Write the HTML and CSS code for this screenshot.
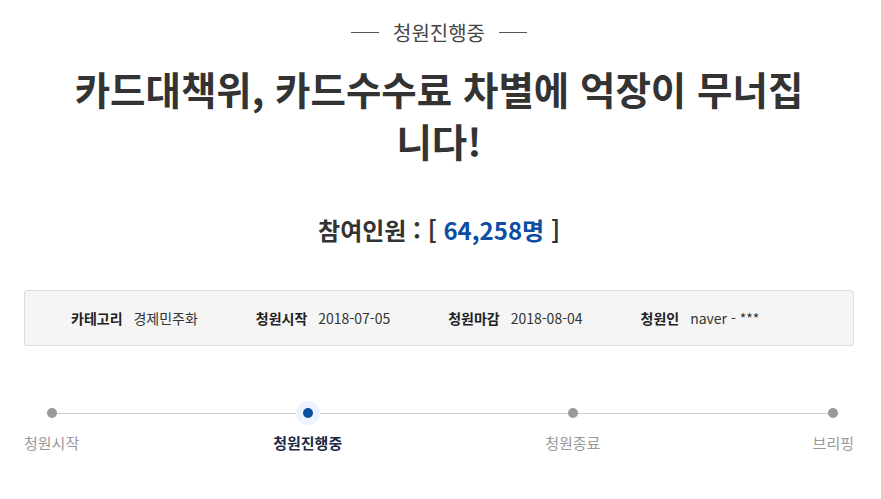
FILE: index.html
```html
<!DOCTYPE html>
<html lang="ko">
<head>
  <meta charset="UTF-8">
  <meta name="viewport" content="width=device-width, initial-scale=1.0">
  <title>청원 상세</title>
  <link rel="stylesheet" href="styles.css">
</head>
<body>
  <div class="petition">
    <!-- 상태 -->
    <p class="status"><span>청원진행중</span></p>

    <h1 class="title">카드대책위, 카드수수료 차별에 억장이 무너집니다!</h1>

    <p class="count">참여인원 : [ <span class="num">64,258명</span> ]</p>

    <!-- 청원 정보 -->
    <ul class="info">
      <li><b>카테고리</b> 경제민주화</li>
      <li><b>청원시작</b> 2018-07-05</li>
      <li><b>청원마감</b> 2018-08-04</li>
      <li><b>청원인</b> naver - ***</li>
    </ul>

    <!-- 진행 단계 -->
    <ol class="steps">
      <li class="step"><i class="dot"></i><span>청원시작</span></li>
      <li class="step on"><i class="dot"></i><span>청원진행중</span></li>
      <li class="step"><i class="dot"></i><span>청원종료</span></li>
      <li class="step last"><i class="dot"></i><span>브리핑</span></li>
    </ol>
  </div>
</body>
</html>
```

FILE: styles.css
```css
body {
  margin: 0;
  padding: 0;
  font-family: "Noto Sans CJK KR", "Noto Sans", sans-serif;
  color: #333;
  background: #fff;
}
.petition {
  width: 830px;
  margin-left: 24px;
}
.status {
  margin: 0;
  padding-top: 10px;
  text-align: center;
  font-size: 20px;
  line-height: 30px;
  color: #444;
}
.status span {
  display: inline-flex;
  align-items: center;
  gap: 14px;
}
.status span::before,
.status span::after {
  content: "";
  width: 28px;
  height: 1px;
  background: #555;
}
.title {
  width: 750px;
  margin: 14px auto 0;
  text-align: center;
  font-size: 38.5px;
  font-weight: 700;
  line-height: 52px;
  color: #333;
}
.count {
  margin: 48px 0 0;
  text-align: center;
  font-size: 24px;
  font-weight: 700;
  line-height: 32px;
  color: #333;
}
.count .num {
  color: #0b4ea2;
}
.info {
  list-style: none;
  margin: 44px 0 0;
  padding: 0 0 0 46px;
  height: 54px;
  display: flex;
  align-items: center;
  gap: 58px;
  background: #f5f5f5;
  border: 1px solid #ddd;
  border-radius: 3px;
  font-size: 14px;
  color: #333;
}
.info b {
  margin-right: 7px;
  color: #222;
}
.steps {
  list-style: none;
  margin: 60px 0 0;
  padding: 0;
  display: flex;
  position: relative;
}
.steps::before {
  content: "";
  position: absolute;
  left: 26px;
  right: 22px;
  top: 7px;
  height: 1px;
  background: #ccc;
}
.step {
  display: flex;
  flex-direction: column;
  align-items: center;
  gap: 14px;
  font-size: 15px;
  color: #999;
  position: relative;
}
.step:nth-child(2) {
  margin-left: 194px;
}
.step:nth-child(3) {
  margin-left: 203px;
}
.step:nth-child(4) {
  margin-left: auto;
}
.dot {
  width: 10px;
  height: 10px;
  margin-top: 2px;
  border-radius: 50%;
  background: #999;
}
.step.on {
  color: #1c2a48;
  font-weight: 700;
}
.step.on .dot {
  background: #0b4ea2;
  box-shadow: 0 0 0 7px #edf3fc;
}
```
